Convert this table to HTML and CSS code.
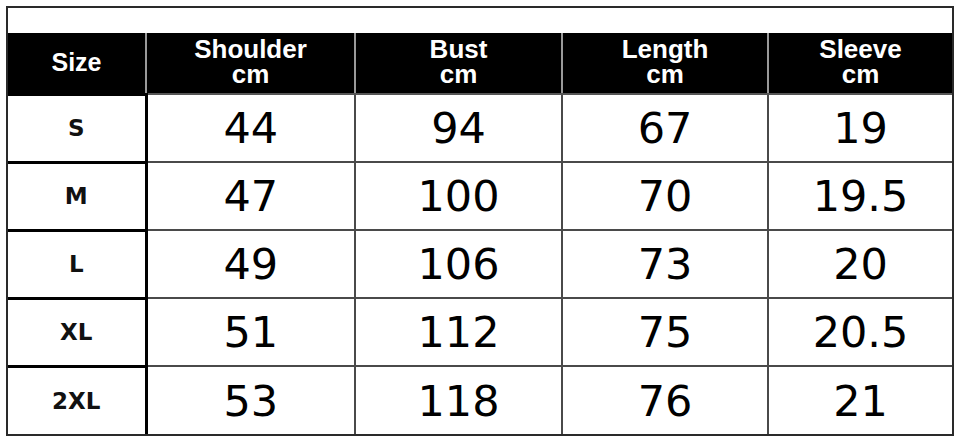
FILE: index.html
```html
<!DOCTYPE html>
<html>
<head>
<meta charset="utf-8">
<link rel="stylesheet" href="styles.css">
</head>
<body>
<div class="sheet">
  <div class="band"></div>
  <table class="chart">
    <colgroup>
      <col class="c1"><col class="c2"><col class="c3"><col class="c4"><col class="c5">
    </colgroup>
    <thead>
      <tr>
        <th class="size-h">Size</th>
        <th><span class="hl">Shoulder</span><span class="hl">cm</span></th>
        <th><span class="hl">Bust</span><span class="hl">cm</span></th>
        <th><span class="hl">Length</span><span class="hl">cm</span></th>
        <th><span class="hl">Sleeve</span><span class="hl">cm</span></th>
      </tr>
    </thead>
    <tbody>
      <tr><td class="sz">S</td><td>44</td><td>94</td><td>67</td><td>19</td></tr>
      <tr><td class="sz">M</td><td>47</td><td>100</td><td>70</td><td>19.5</td></tr>
      <tr><td class="sz">L</td><td>49</td><td>106</td><td>73</td><td>20</td></tr>
      <tr><td class="sz">XL</td><td>51</td><td>112</td><td>75</td><td>20.5</td></tr>
      <tr><td class="sz">2XL</td><td>53</td><td>118</td><td>76</td><td>21</td></tr>
    </tbody>
  </table>
</div>
</body>
</html>
```

FILE: styles.css
```css
html, body {
  margin: 0;
  padding: 0;
  background: #ffffff;
}

body {
  padding: 6px 0 0 6px;
}

.sheet {
  width: 944px;
  border: 2px solid #2a2a2a;
  background: #fff;
}

.band {
  height: 25px;
}

.chart {
  width: 944px;
  table-layout: fixed;
  border-collapse: collapse;
  border-style: hidden;
}

.c1 { width: 138px; }
.c2 { width: 209px; }
.c3 { width: 207px; }
.c4 { width: 206px; }
.c5 { width: 184px; }

.chart th {
  background: #000;
  color: #fff;
  font-family: "Liberation Sans", Arial, sans-serif;
  font-weight: bold;
  font-size: 26px;
  line-height: 25px;
  height: 61px;
  padding: 0 0 3px 0;
  box-sizing: border-box;
  text-align: center;
  vertical-align: middle;
  border-left: 2px solid #9a9a9a;
  border-right: 2px solid #9a9a9a;
  border-bottom: 2px solid #555;
}

.chart th .hl {
  display: block;
  height: 25px;
}

.chart th.size-h {
  font-size: 25px;
  padding: 0;
}

.chart td {
  height: 68px;
  padding: 0;
  box-sizing: border-box;
  text-align: center;
  vertical-align: middle;
  font-family: "DejaVu Sans", Verdana, sans-serif;
  font-size: 43px;
  color: #000;
  border: 2px solid #4a4a4a;
}

.chart td.sz {
  font-family: "DejaVu Sans", Verdana, sans-serif;
  font-weight: bold;
  font-size: 23px;
  color: #111;
  border: 3px solid #000;
}
```
